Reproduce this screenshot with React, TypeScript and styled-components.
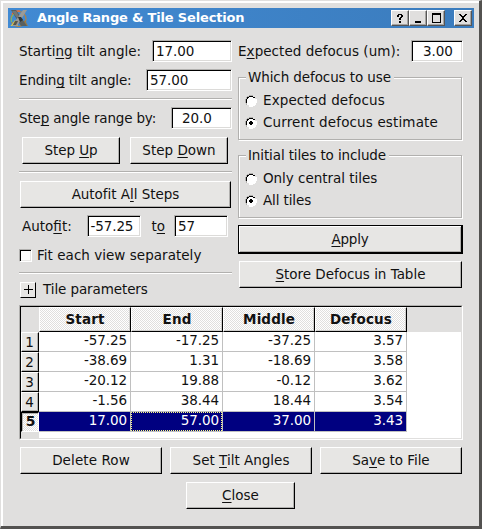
import React from "react";
import styled, { createGlobalStyle, css } from "styled-components";

const face = "#e0dfde";
const buttonFace = "#e7e6e4";
const shade = "#b1b0ae";

const GlobalStyle = createGlobalStyle`
  * { box-sizing: border-box; }
  body { margin: 0; background: ${face}; overflow: hidden; }
  body, button, input { font-family: "DejaVu Sans", Verdana, sans-serif; font-size: 13.5px; color: #111; letter-spacing: 0.1px; }
`;

const Window = styled.main`
  width: 482px;
  height: 529px;
  padding: 7px 5px 0 7px;
  background: ${face};
  border: solid #535250;
  border-width: 1px 3px 3px 1px;
  border-top-color: ${face};
  border-left-color: ${face};
  box-shadow: inset 2px 2px 0 #fff;
`;

const TitleBar = styled.header`
  display: flex;
  align-items: center;
  width: 466px;
  height: 20px;
  padding: 0 2px 0 1px;
  background: linear-gradient(90deg, #418ad3, #3b7cbd);
`;

const Title = styled.h1`
  flex: 1;
  margin: 0 0 0 9px;
  font-size: 13px;
  line-height: 20px;
  font-weight: bold;
  letter-spacing: -0.17px;
  color: #fff;
  white-space: nowrap;
`;

const TitleButton = styled.button<{ $apart?: boolean }>`
  display: block;
  width: 18px;
  height: 16px;
  margin: 0 0 0 ${(p) => (p.$apart ? 9 : 0)}px;
  padding: 0;
  background: ${face};
  border: 1px solid;
  border-color: #fff #555 #555 #fff;
  box-shadow: inset -1px -1px 0 #a5a4a2;
  svg { display: block; }
`;

const Columns = styled.div`
  display: grid;
  grid-template-columns: 213px 225px;
  column-gap: 6px;
  height: 277px;
  padding: 12px 0 0 11px;
`;

const Column = styled.section`
  display: flex;
  flex-direction: column;
`;

const Row = styled.div<{ $h: number; $mb?: number; $pr?: number; $pl?: number }>`
  display: flex;
  align-items: center;
  flex: none;
  height: ${(p) => p.$h}px;
  margin-bottom: ${(p) => p.$mb ?? 0}px;
  padding: 0 ${(p) => p.$pr ?? 0}px 0 ${(p) => p.$pl ?? 0}px;
`;

const Caption = styled.label<{ $ls?: number }>`
  flex: 1;
  height: 20px;
  line-height: 20px;
  white-space: nowrap;
  letter-spacing: ${(p) => p.$ls ?? 0.1}px;
`;

const Key = styled.span`
  text-decoration: underline;
  text-decoration-thickness: 1px;
  text-underline-offset: 2px;
  text-decoration-skip-ink: none;
`;

const Field = styled.input<{ $w: number; $pl?: number }>`
  flex: none;
  width: ${(p) => p.$w}px;
  height: 22px;
  padding: 0 0 1px ${(p) => p.$pl ?? 3}px;
  background: #fff;
  border: 1px solid;
  border-color: ${shade} #fff #fff ${shade};
  border-radius: 0;
  box-shadow: inset 1px 1px 0 #000, inset -1px -1px 0 #dcdbd9;
  outline: none;
  letter-spacing: -0.1px;
`;

const Rule = styled.hr<{ $mb: number }>`
  flex: none;
  width: 100%;
  height: 2px;
  margin: 0 0 ${(p) => p.$mb}px;
  border: 0;
  border-top: 1px solid ${shade};
  background: #fff;
`;

const PushButton = styled.button<{ $w: number; $default?: boolean; $ls?: number }>`
  flex: none;
  width: ${(p) => p.$w}px;
  height: 27px;
  padding: 0;
  line-height: 23px;
  text-align: center;
  white-space: nowrap;
  letter-spacing: ${(p) => p.$ls ?? 0}px;
  background: ${buttonFace};
  border: 1px solid;
  border-color: #fff #000 #000 #fff;
  box-shadow: inset -1px -1px 0 ${shade};
  ${(p) =>
    p.$default &&
    css`
      height: 29px;
      border-color: #000;
      border-width: 1px 2px 2px 1px;
      box-shadow: inset 1px 1px 0 #fff, inset -1px -1px 0 ${shade};
    `}
`;

const Expander = styled.button`
  flex: none;
  width: 16px;
  height: 16px;
  margin-right: 7px;
  padding: 0;
  background: ${buttonFace};
  border: 1px solid;
  border-color: #fff #000 #000 #fff;
  svg { display: block; }
`;

const CheckBox = styled.span`
  flex: none;
  width: 13px;
  height: 13px;
  margin-right: 5px;
  background: #fff;
  border: 1px solid;
  border-color: ${shade} #fff #fff ${shade};
  box-shadow: inset 1px 1px 0 #000, inset -1px -1px 0 #e9e8e6;
`;

const Group = styled.div<{ $mb: number }>`
  flex: none;
  width: 224px;
  height: 63px;
  margin-bottom: ${(p) => p.$mb}px;
  padding-left: 6px;
  border: 1px solid ${shade};
  box-shadow: 1px 1px 0 #fff, inset 1px 1px 0 #fff;
`;

const Legend = styled.div<{ $w: number; $ls?: number }>`
  width: ${(p) => p.$w}px;
  height: 16px;
  margin: -9px 0 4px 1px;
  padding-left: 2px;
  line-height: 16px;
  white-space: nowrap;
  letter-spacing: ${(p) => p.$ls ?? 0.1}px;
  background: ${face};
`;

const RadioRow = styled.div`
  display: flex;
  align-items: center;
  height: 22px;
  svg { flex: none; margin: 2px 6px 0 0; }
`;

const Sheet = styled.div`
  width: 444px;
  height: 135px;
  margin-left: 11px;
  border: 1px solid;
  border-color: ${shade} #fff #fff ${shade};
  background: #fff;
`;

const SheetInner = styled.div`
  height: 133px;
  border: 1px solid;
  border-color: #000 ${face} ${face} #000;
  background: linear-gradient(${face}, ${face}) 0 0 / 100% 25px no-repeat,
    linear-gradient(${face}, ${face}) 0 0 / 18px 100% no-repeat, #fff;
`;

const GridLine = styled.div`
  display: grid;
  grid-template-columns: 18px repeat(4, 92px);
`;

const dither = css`
  background: repeating-conic-gradient(#fff 0 25%, ${face} 0 50%) 0 0 / 2px 2px;
`;

const HeadCell = styled.div`
  height: 25px;
  line-height: 23px;
  font-weight: bold;
  font-size: 13.5px;
  text-align: center;
  border: 1px solid;
  border-color: #fff #000 #000 #fff;
  box-shadow: inset -1px -1px 0 #cfcecc;
  ${dither}
`;

const IndexCell = styled.div<{ $current: boolean }>`
  height: 20px;
  padding-right: 1px;
  line-height: 18px;
  text-align: center;
  background: ${buttonFace};
  border: 1px solid;
  border-color: #fff #000 #000 #fff;
  box-shadow: inset -1px -1px 0 ${shade};
  letter-spacing: 0;
  ${(p) =>
    p.$current &&
    css`
      font-weight: bold;
      font-size: 14px;
      line-height: 17px;
      padding: 0 0 0 1px;
      border-color: #000 #fff #fff #000;
      box-shadow: inset 1px 1px 0 ${shade};
      ${dither}
    `}
`;

const Cell = styled.div<{ $selected: boolean; $focus: boolean }>`
  height: 20px;
  padding-right: 3px;
  line-height: 17px;
  text-align: right;
  letter-spacing: -0.1px;
  color: ${(p) => (p.$selected ? "#fff" : "#111")};
  background: ${(p) => (p.$selected ? "#000080" : "#fff")};
  border: solid #c0c0c0;
  border-width: 0 1px 1px 0;
  ${(p) =>
    p.$focus &&
    css`
      background:
        repeating-linear-gradient(90deg, #ffff80 0 1px, #000080 1px 2px) 0 0 / 100% 1px no-repeat,
        repeating-linear-gradient(90deg, #ffff80 0 1px, #000080 1px 2px) 0 100% / 100% 1px no-repeat,
        repeating-linear-gradient(#ffff80 0 1px, #000080 1px 2px) 0 0 / 1px 100% no-repeat,
        repeating-linear-gradient(#ffff80 0 1px, #000080 1px 2px) 100% 0 / 1px 100% no-repeat,
        #000080;
      background-origin: padding-box;
      background-clip: padding-box;
    `}
`;

const Footer = styled.footer`
  display: flex;
  justify-content: space-between;
  width: 442px;
  margin: 7px 0 8px 12px;
`;

const CloseRow = styled.div`
  display: flex;
  justify-content: center;
  width: 441px;
  margin-left: 12px;
`;

const AppIcon = () => (
  <svg width="19" height="19" viewBox="0 0 19 19">
    <circle cx="9.5" cy="10" r="7.5" fill="none" stroke="#b38343" strokeWidth="1.2" />
    <path d="M2.5 13 Q1.5 8 5 4.5" fill="none" stroke="#72c26d" />
    <path d="M3 5 Q6 1 11 2" fill="none" stroke="#f06b35" strokeWidth="1.3" />
    <path d="M1.5 17 L6 11 L9 17Z" fill="#d9ca4b" />
    <path d="M11 17 L16 11 L19 17Z" fill="#977a47" />
    <path d="M2 1 H7 L18 17 H12Z" fill="#59605f" />
    <path d="M14 1 H18 L8 17 H3 L9 8Z" fill="#9b9b98" />
    <path d="M3 2 H7 L10 7 L8 9Z" fill="#737878" />
    <path d="M9 8 L12 8 L14 11 L11 13Z" fill="#303536" />
    <path d="M6 12 L9 12 L7 16 L4 16Z" fill="#5b5648" />
  </svg>
);

const Radio = ({ on }: { on?: boolean }) => (
  <svg width="12" height="12" viewBox="0 0 12 12" shapeRendering="crispEdges">
    <path d="M4 1h4v1h2v2h1v4h-1v2H8v1H4v-1H2V8H1V4h1V2h2z" fill="#fff" />
    <path d="M4 0h4v1H4zM2 1h2v1H2zM1 2h1v2H1zM0 4h1v4H0zM1 8h1v2H1z" fill={shade} />
    <path d="M4 1h4v1H4zM8 2h2v1H8zM2 2h2v1H2zM2 3h1v1H2zM1 4h1v4H1z" fill="#000" />
    <path d="M11 4h1v4h-1zM10 8h1v2h-1zM8 10h2v1H8zM4 11h4v1H4z" fill="#fff" />
    {on && <path d="M5 4h2v1h1v2H7v1H5V7H4V5h1z" fill="#000" />}
  </svg>
);

const glyphs = {
  help: "M6 3h4v1H6zM5 4h2v2H5zM9 4h2v2H9zM8 6h2v1H8zM7 7h2v2H7zM7 10h2v2H7z",
  minimize: "M5 10h6v2H5z",
  maximize: "M4 2h9v10H4zM5 4v7h7V4z",
  close: "M4 3h2v1h1v1h2V4h1V3h2v1h-1v1h-1v1H9v2h1v1h1v1h1v1h-2v-1H9V9H7v1H6v1H4v-1h1V9h1V8h1V6H6V5H5V4H4z",
};

const Glyph = ({ name }: { name: keyof typeof glyphs }) => (
  <svg width="16" height="14" viewBox="0 0 16 14" shapeRendering="crispEdges">
    <path d={glyphs[name]} fillRule="evenodd" />
  </svg>
);

const headings = ["Start", "End", "Middle", "Defocus"];
const rows = [
  ["-57.25", "-17.25", "-37.25", "3.57"],
  ["-38.69", "1.31", "-18.69", "3.58"],
  ["-20.12", "19.88", "-0.12", "3.62"],
  ["-1.56", "38.44", "18.44", "3.54"],
  ["17.00", "57.00", "37.00", "3.43"],
];
const selectedRow = 4;

export default function App() {
  return (
    <>
      <GlobalStyle />
      <Window>
        <TitleBar>
          <AppIcon />
          <Title>Angle Range &amp; Tile Selection</Title>
          <TitleButton aria-label="Help"><Glyph name="help" /></TitleButton>
          <TitleButton aria-label="Minimize"><Glyph name="minimize" /></TitleButton>
          <TitleButton aria-label="Maximize"><Glyph name="maximize" /></TitleButton>
          <TitleButton aria-label="Close window" $apart><Glyph name="close" /></TitleButton>
        </TitleBar>
        <Columns>
          <Column>
            <Row $h={22} $mb={7}>
              <Caption $ls={-0.03}>Starti<Key>n</Key>g tilt angle:</Caption>
              <Field $w={80} defaultValue="17.00" />
            </Row>
            <Row $h={22} $mb={7}>
              <Caption $ls={-0.15}>Endin<Key>g</Key> tilt angle:</Caption>
              <Field $w={86} defaultValue="57.00" />
            </Row>
            <Rule $mb={7} />
            <Row $h={22} $mb={8}>
              <Caption $ls={-0.17}>Ste<Key>p</Key> angle range by:</Caption>
              <Field $w={61} $pl={10} defaultValue="20.0" />
            </Row>
            <Row $h={27} $mb={7} $pl={3}>
              <PushButton $w={98} $ls={-0.1}>Step <Key>U</Key>p</PushButton>
              <Row $h={27} $pl={10}>
                <PushButton $w={98}>Step <Key>D</Key>own</PushButton>
              </Row>
            </Row>
            <Rule $mb={8} />
            <Row $h={27} $mb={7} $pl={1}>
              <PushButton $w={211} $ls={-0.03}>Autofit A<Key>l</Key>l Steps</PushButton>
            </Row>
            <Row $h={22} $mb={9} $pl={3} $pr={4}>
              <Caption $ls={0}>Auto<Key>fi</Key>t:</Caption>
              <Field $w={54} $pl={2} defaultValue="-57.25" />
              <Row $h={22} $pl={10}>
                <Caption $ls={0}>t<Key>o</Key></Caption>
                <Row $h={22} $pl={9}>
                  <Field $w={54} defaultValue="57" />
                </Row>
              </Row>
            </Row>
            <Row $h={18} $mb={8}>
              <CheckBox />
              <Caption $ls={0.03}>Fit each view separately</Caption>
            </Row>
            <Rule $mb={8} />
            <Row $h={16} $pl={1}>
              <Expander aria-label="Expand">
                <svg width="14" height="14" shapeRendering="crispEdges">
                  <path d="M3 6h9v1H3zM7 2h1v9H7z" />
                </svg>
              </Expander>
              <Row $h={16} $mb={2}>
                <Caption $ls={-0.1}>Tile parameters</Caption>
              </Row>
            </Row>
          </Column>
          <Column>
            <Row $h={22} $mb={15}>
              <Caption $ls={0.05}>E<Key>x</Key>pected defocus (um):</Caption>
              <Field $w={52} $pl={11} defaultValue="3.00" />
            </Row>
            <Group $mb={15}>
              <Legend $w={148} $ls={-0.1}>Which defocus to use</Legend>
              <RadioRow><Radio /><Caption>Expected defocus</Caption></RadioRow>
              <RadioRow><Radio on /><Caption $ls={0.14}>Current defocus estimate</Caption></RadioRow>
            </Group>
            <Group $mb={7}>
              <Legend $w={143} $ls={-0.12}>Initial tiles to include</Legend>
              <RadioRow><Radio /><Caption $ls={-0.03}>Only central tiles</Caption></RadioRow>
              <RadioRow><Radio on /><Caption $ls={-0.12}>All tiles</Caption></RadioRow>
            </Group>
            <Row $h={29} $mb={7}>
              <PushButton $w={225} $default $ls={-0.2}><Key>A</Key>pply</PushButton>
            </Row>
            <Row $h={27} $pl={1}>
              <PushButton $w={223} $ls={-0.03}><Key>S</Key>tore Defocus in Table</PushButton>
            </Row>
          </Column>
        </Columns>
        <Sheet>
          <SheetInner>
            <GridLine>
              <span />
              {headings.map((h) => <HeadCell key={h}>{h}</HeadCell>)}
            </GridLine>
            {rows.map((cells, r) => (
              <GridLine key={r}>
                <IndexCell $current={r === selectedRow}>{r + 1}</IndexCell>
                {cells.map((value, c) => (
                  <Cell key={c} $selected={r === selectedRow} $focus={r === selectedRow && c === 1}>
                    {value}
                  </Cell>
                ))}
              </GridLine>
            ))}
          </SheetInner>
        </Sheet>
        <Footer>
          <PushButton $w={142} $ls={0.1}>Delete Row</PushButton>
          <PushButton $w={142}>Set <Key>T</Key>ilt Angles</PushButton>
          <PushButton $w={142} $ls={-0.05}>Sa<Key>v</Key>e to File</PushButton>
        </Footer>
        <CloseRow>
          <PushButton $w={109}><Key>C</Key>lose</PushButton>
        </CloseRow>
      </Window>
    </>
  );
}
